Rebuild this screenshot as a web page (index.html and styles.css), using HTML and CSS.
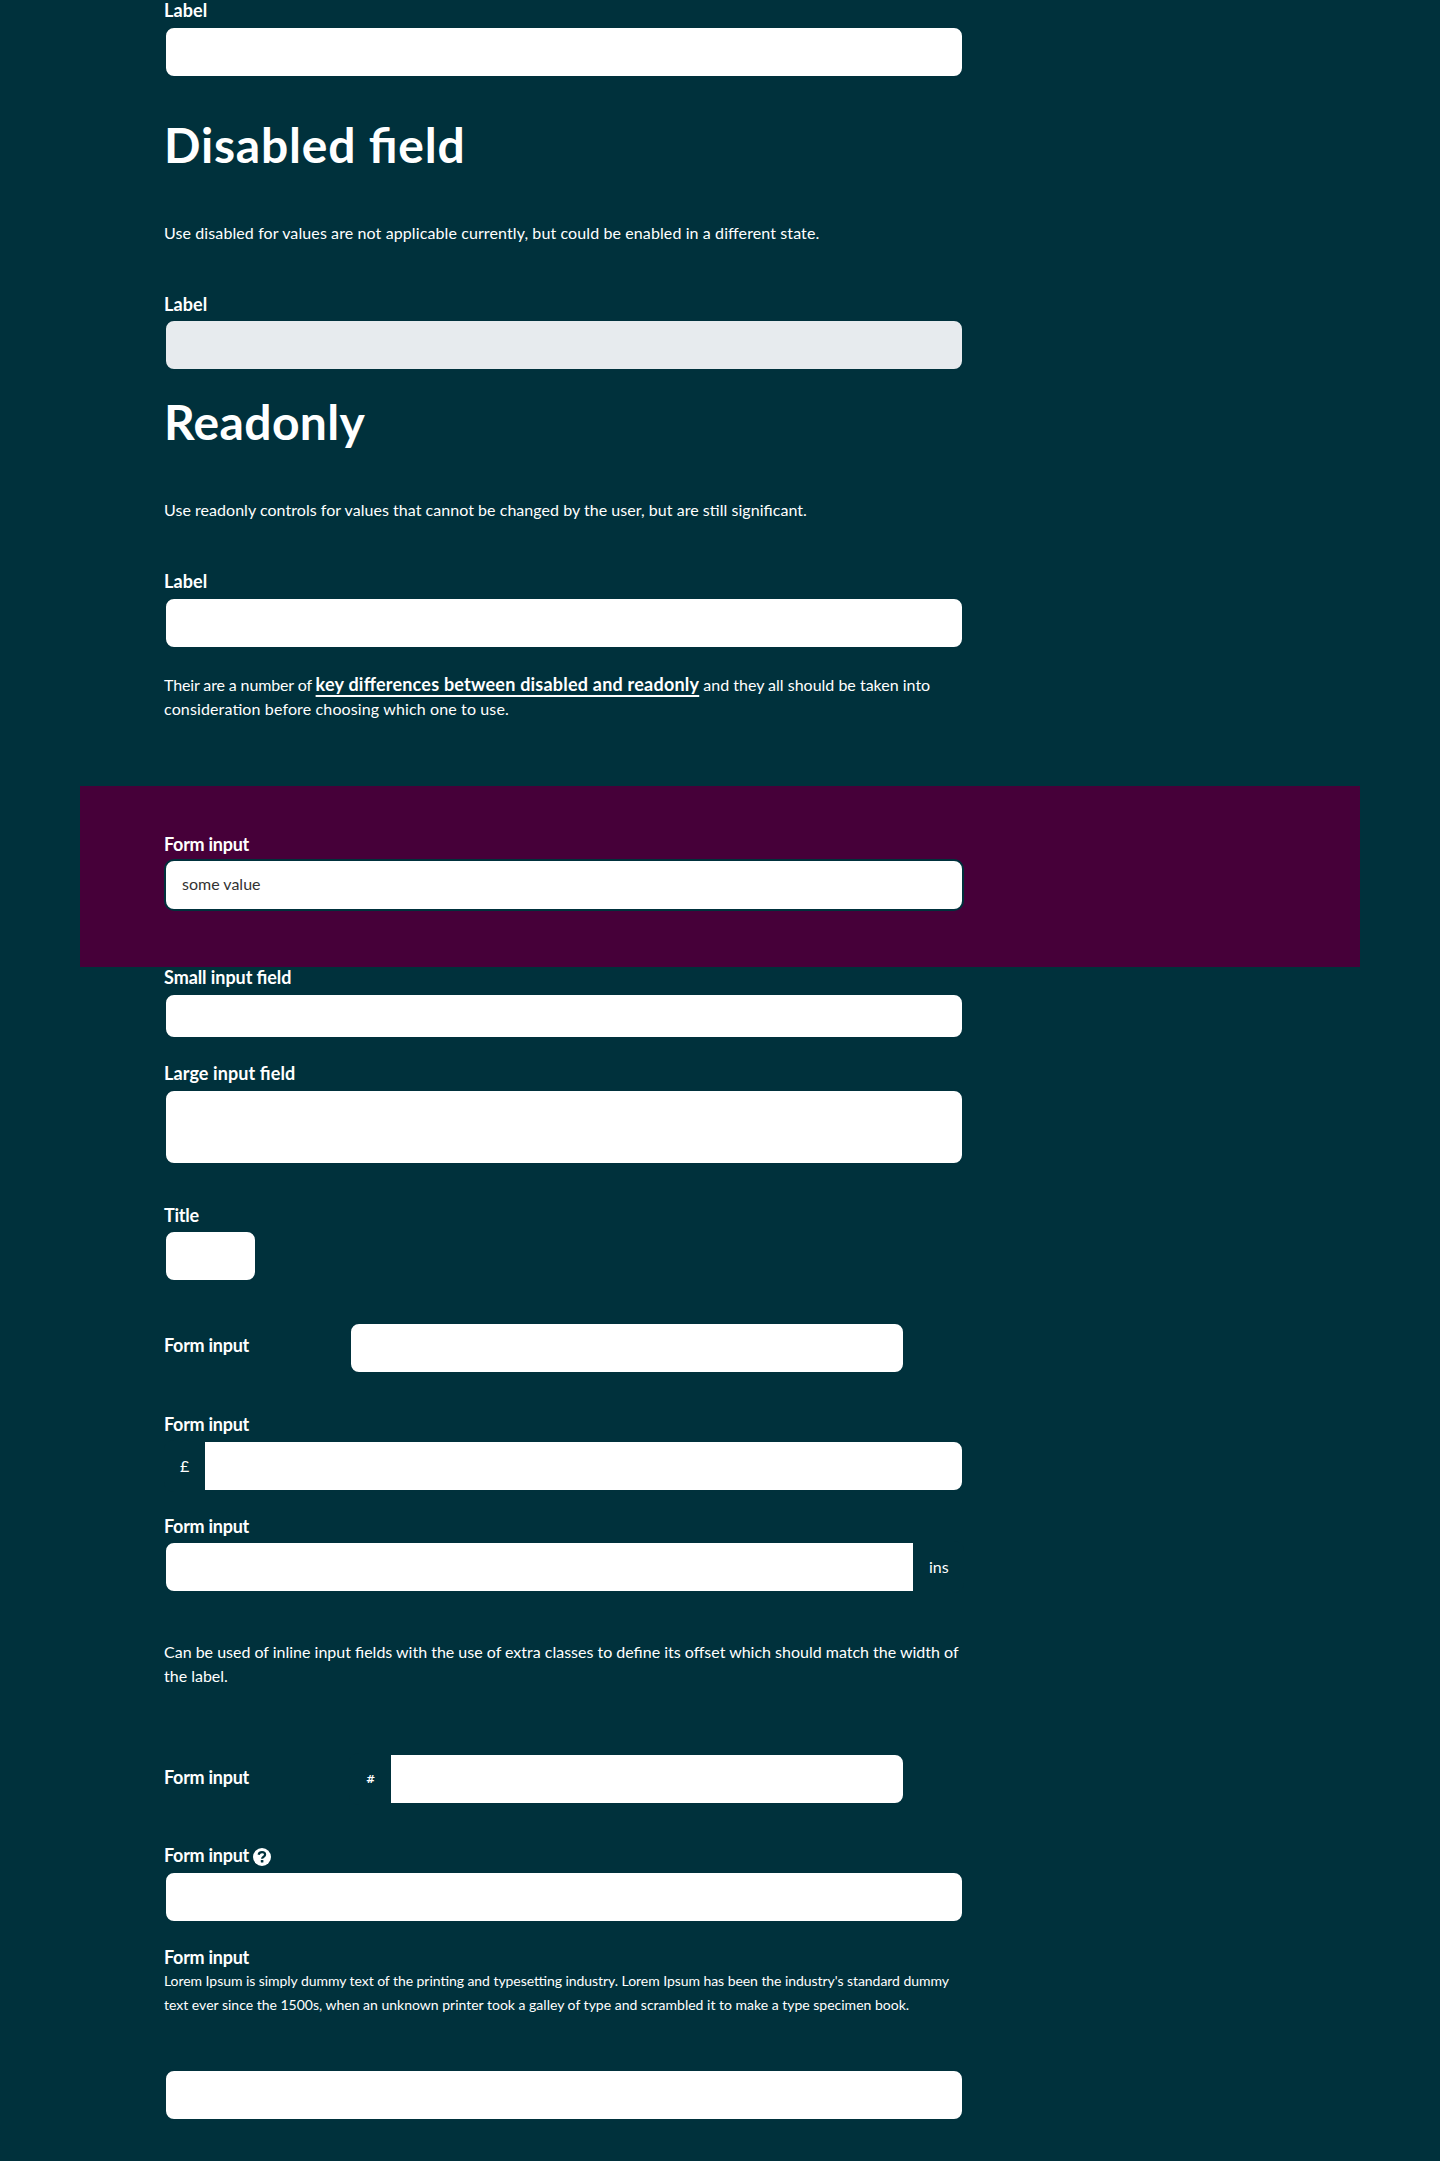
FILE: index.html
```
<!DOCTYPE html>
<html lang="en">
<head>
<meta charset="utf-8">
<title>Form inputs</title>
<link rel="stylesheet" href="styles.css">
</head>
<body>
<main class="page">
  <section class="content">
    <div class="field first">
      <label class="label short" for="f1">Label</label>
      <input class="input" id="f1" type="text">
    </div>
    <h1 class="title title-wide gap-36">Disabled field</h1>
    <p class="text text-a gap-49">Use disabled for values are not applicable currently, but could be enabled in a different state.</p>
    <div class="field gap-47">
      <label class="label short tight" for="f2">Label</label>
      <input class="input" id="f2" type="text" disabled>
    </div>
    <h1 class="title gap-20">Readonly</h1>
    <p class="text text-d gap-49">Use readonly controls for values that cannot be changed by the user, but are still significant.</p>
    <div class="field gap-47">
      <label class="label short" for="f3">Label</label>
      <input class="input" id="f3" type="text" readonly>
    </div>
    <p class="text gap-24"><span class="lead">Their are a number of </span><a class="link">key differences between disabled and readonly</a> and they all should be taken into <span class="text-b">consideration before choosing which one to use.</span></p>
  </section>

  <section class="band">
    <div class="field">
      <label class="label tight" for="f4">Form input</label>
      <input class="input value" id="f4" type="text" value="some value">
    </div>
  </section>

  <section class="content">
    <div class="field lift">
      <label class="label sizes" for="f5">Small input field</label>
      <input class="input small" id="f5" type="text">
    </div>
    <div class="field gap-22">
      <label class="label short" for="f6">Large input field</label>
      <input class="input large" id="f6" type="text">
    </div>
    <div class="field gap-38">
      <label class="label tight" for="f7">Title</label>
      <input class="input narrow" id="f7" type="text">
    </div>
    <div class="row gap-40">
      <label class="label row-label" for="f8">Form input</label>
      <input class="input row-control" id="f8" type="text">
    </div>
    <div class="field gap-38">
      <label class="label" for="f9">Form input</label>
      <div class="group">
        <span class="addon before">£</span>
        <input class="group-input" id="f9" type="text">
      </div>
    </div>
    <div class="field gap-22">
      <label class="label tight" for="f10">Form input</label>
      <div class="group">
        <input class="group-input" id="f10" type="text">
        <span class="addon after">ins</span>
      </div>
    </div>
    <p class="text text-c gap-47">Can be used of inline input fields with the use of extra classes to define its offset which should match the width of the label.</p>
    <div class="row gap-65">
      <label class="label row-label low" for="f11">Form input</label>
      <div class="group row-control">
        <span class="addon before hash">#</span>
        <input class="group-input" id="f11" type="text">
      </div>
    </div>
    <div class="field gap-38">
      <div class="label-line">
        <label class="label" for="f12">Form input</label>
        <svg class="help" viewBox="0 0 18 18" width="18" height="18" aria-hidden="true">
          <circle cx="9" cy="9" r="9" fill="#fff"/>
          <path d="M5.6 6.7C6 5.1 7.2 4.2 9 4.2c1.9 0 3.1 1 3.1 2.5 0 2.1-3 2-3 4.1" fill="none" stroke="#00313c" stroke-width="2.2"/>
          <rect x="7.8" y="12" width="2.6" height="2.6" rx=".6" fill="#00313c"/>
        </svg>
      </div>
      <input class="input" id="f12" type="text">
    </div>
    <div class="field gap-22">
      <label class="label flush" for="f13">Form input</label>
      <p class="hint"><span class="hint-a">Lorem Ipsum is simply dummy text of the printing and typesetting industry. Lorem Ipsum has been the industry's standard dummy</span> text ever since the 1500s, when an unknown printer took a galley of type and scrambled it to make a type specimen book.</p>
      <input class="input" id="f13" type="text">
    </div>
  </section>
</main>
</body>
</html>
```
FILE: styles.css
```
* {
  box-sizing: border-box;
}

body {
  margin: 0;
  background: #00313c;
  color: #fff;
  font: 400 16px/24px Lato, "Open Sans", sans-serif;
  font-feature-settings: "liga" 1;
}

.page {
  display: flex;
  flex-direction: column;
  min-height: 2161px;
  padding: 0 80px;
  overflow: hidden;
}

.content {
  display: flex;
  flex-direction: column;
  width: 884px;
  padding-left: 84px;
}

.band {
  margin-top: 65px;
  padding: 46px 396px 56px 84px;
  background: #460039;
}

.field {
  display: flex;
  flex-direction: column;
  align-items: flex-start;
}

.first,
.lift {
  margin-top: -2px;
}

.label {
  height: 28px;
  font-size: 18px;
  font-weight: 700;
  line-height: 25px;
  letter-spacing: -0.27px;
}

.label.tight {
  height: 27px;
}

.label.short {
  letter-spacing: 0.1px;
}

.label.sizes {
  letter-spacing: -0.07px;
}

.label.flush {
  height: 24px;
}

.label-line {
  display: flex;
  gap: 4px;
}

.help {
  margin-top: 5px;
}

.input {
  display: block;
  width: 800px;
  height: 52px;
  margin: 0;
  padding: 0 16px;
  border: 2px solid #00313c;
  border-radius: 10px;
  background: #fff;
  color: #333;
  font: inherit;
}

.input:disabled {
  background: #e7ebee;
}

.value {
  padding-bottom: 3px;
}

.small {
  height: 46px;
}

.large {
  height: 76px;
}

.narrow {
  width: 93px;
}

.row {
  display: flex;
}

.row-label {
  width: 185px;
  margin-top: 11px;
}

.row-label.low {
  margin-top: 12px;
}

.group {
  display: flex;
  width: 800px;
  height: 52px;
  border: 2px solid #00313c;
  border-radius: 10px;
  background: #fff;
}

.row-control {
  width: 556px;
}

.group-input {
  flex: 1;
  min-width: 0;
  margin: 0;
  padding: 0 16px;
  border: 0;
  background: transparent;
  font: inherit;
}

.addon {
  background: #00313c;
  line-height: 48px;
}

.before {
  width: 39px;
  padding-left: 14px;
}

.after {
  width: 49px;
  padding-left: 16px;
}

.hash {
  width: 40px;
  padding-left: 15px;
  font: 700 11px/49px "DejaVu Sans", sans-serif;
  height: 48px;
}

.title {
  height: 58px;
  margin: 0;
  padding-top: 4px;
  font-size: 48px;
  font-weight: 700;
  line-height: 54px;
  letter-spacing: 0.35px;
}

.title-wide {
  letter-spacing: 0.8px;
}

.text {
  margin: 0;
}

.text-a {
  letter-spacing: 0.105px;
}

.text-b {
  letter-spacing: 0.13px;
}

.text-c {
  letter-spacing: -0.005px;
}

.text-d {
  letter-spacing: 0.04px;
}

.lead {
  letter-spacing: -0.13px;
}

.link {
  font-size: 18px;
  font-weight: 700;
  line-height: 20px;
  letter-spacing: 0.22px;
  text-decoration: underline 2px;
  text-underline-offset: 4px;
  text-decoration-skip-ink: none;
}

.hint {
  width: 800px;
  margin: 0 0 52px;
  font-size: 14px;
}

.hint-a {
  letter-spacing: -0.054px;
}

.gap-20 { margin-top: 20px; }
.gap-22 { margin-top: 22px; }
.gap-24 { margin-top: 24px; }
.gap-36 { margin-top: 36px; }
.gap-38 { margin-top: 38px; }
.gap-40 { margin-top: 40px; }
.gap-47 { margin-top: 47px; }
.gap-49 { margin-top: 49px; }
.gap-65 { margin-top: 65px; }
```
